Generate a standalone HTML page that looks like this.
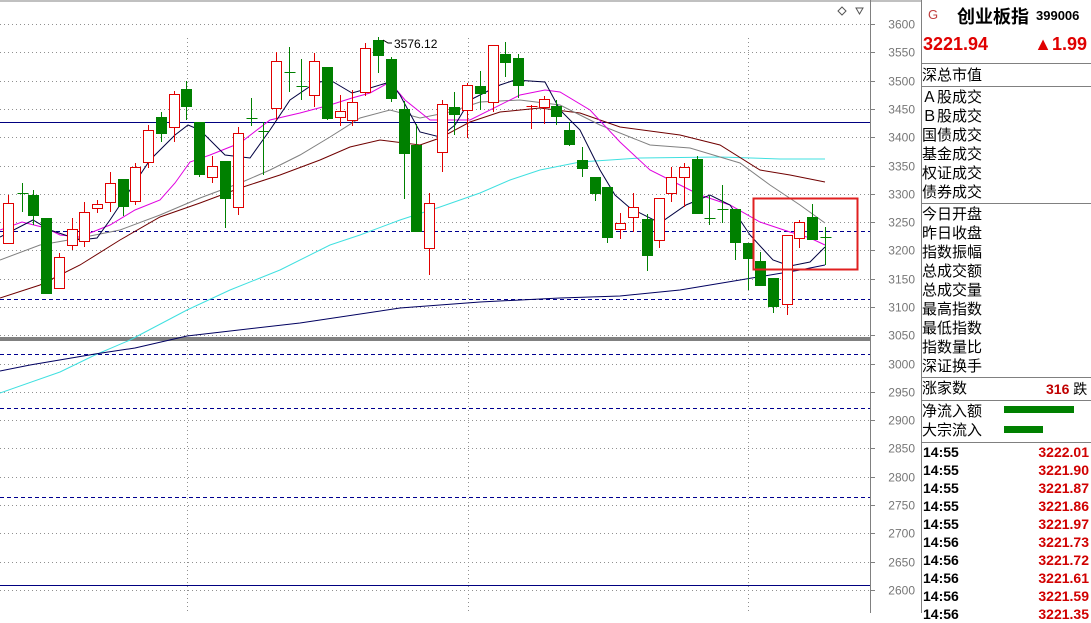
<!DOCTYPE html>
<html><head><meta charset="utf-8"><style>
body{margin:0;width:1091px;height:613px;overflow:hidden;background:#fff;font-family:"Liberation Sans","Noto Sans CJK SC",sans-serif;position:relative}
#ch{position:absolute;left:0;top:0}
.p{position:absolute;left:921px;top:0;width:170px;height:613px;border-left:1px solid #808080}
.l{position:absolute;left:922px;font-size:15px;color:#000;line-height:19px;font-family:"Noto Sans CJK SC","WenQuanYi Zen Hei",sans-serif;letter-spacing:0px}
.hr{position:absolute;left:921px;width:170px;height:1px;background:#808080}
.t{position:absolute;left:923px;font-size:14px;font-weight:bold;line-height:18px}
.v{position:absolute;right:2px;font-size:14px;font-weight:bold;color:#d00000;line-height:18px}
</style></head><body>
<svg id="ch" width="921" height="613" xmlns="http://www.w3.org/2000/svg"></svg>
<div class="p"></div>
<div style="position:absolute;left:928px;top:7px;font-size:13px;color:#c04040">G</div>
<div style="position:absolute;left:957px;top:3px;font-size:18px;font-weight:bold;font-family:'Noto Sans CJK SC',sans-serif">创业板指</div>
<div style="position:absolute;left:1036px;top:8px;font-size:13px;font-weight:bold">399006</div>
<div style="position:absolute;left:923px;top:34px;font-size:18px;font-weight:bold;color:#e00000">3221.94</div>
<div style="position:absolute;right:4px;top:34px;font-size:18px;font-weight:bold;color:#e00000">▲1.99</div>
<div class="hr" style="top:63px"></div>
<div class="l" style="top:65px">深总市值</div>
<div class="hr" style="top:86px"></div>
<div class="l" style="top:87px">Ａ股成交<br>Ｂ股成交<br>国债成交<br>基金成交<br>权证成交<br>债券成交</div>
<div class="hr" style="top:203px"></div>
<div class="l" style="top:204px">今日开盘<br>昨日收盘<br>指数振幅<br>总成交额<br>总成交量<br>最高指数<br>最低指数<br>指数量比<br>深证换手</div>
<div class="hr" style="top:377px"></div>
<div class="l" style="top:378px">涨家数</div>
<div style="position:absolute;left:1046px;top:379px;font-size:14px;font-weight:bold;color:#c00000">316 <span style="color:#000;font-weight:normal;font-family:'Noto Sans CJK SC',sans-serif">跌</span></div>
<div class="hr" style="top:400px"></div>
<div class="l" style="top:401px">净流入额<br>大宗流入</div>
<div style="position:absolute;left:1004px;top:406px;width:70px;height:7px;background:#008000"></div>
<div style="position:absolute;left:1004px;top:426px;width:39px;height:7px;background:#008000"></div>
<div class="hr" style="top:442px"></div>
<div id="tr"></div>
<script>
var S='http://www.w3.org/2000/svg',svg=document.getElementById('ch');
function el(n,a){var e=document.createElementNS(S,n);for(var k in a)e.setAttribute(k,a[k]);svg.appendChild(e);return e}
function Y(p){return 24+(3600-p)*0.566}
for(var k=0;k<=20;k++){var y=Math.round(Y(3600-k*50))+.5;el('line',{x1:0,x2:870,y1:y,y2:y,stroke:'#909090','stroke-dasharray':'1,3'});
 el('line',{x1:870,x2:875,y1:y,y2:y,stroke:'#808080'});
 var t=el('text',{x:915,y:y+4,'text-anchor':'end','font-size':'12','fill':'#777','font-family':'Liberation Sans'});t.textContent=3600-k*50;}
[187,468,748].forEach(function(x){el('line',{x1:x+.5,x2:x+.5,y1:38,y2:613,stroke:'#909090','stroke-dasharray':'1,3'})});
el('line',{x1:870.5,x2:870.5,y1:0,y2:613,stroke:'#808080'});
el('line',{x1:0,x2:921,y1:1,y2:1,stroke:'#808080'});
el('line',{x1:0,x2:870,y1:122.5,y2:122.5,stroke:'#000080'});
el('line',{x1:0,x2:870,y1:585.5,y2:585.5,stroke:'#000080'});
[231,299,354,408,497].forEach(function(y){el('line',{x1:0,x2:870,y1:y+.5,y2:y+.5,stroke:'#000090','stroke-dasharray':'4,3'})});
el('rect',{x:0,y:337,width:870,height:4,fill:'#808080'});
function pl(pts,c){el('polyline',{points:pts,fill:'none',stroke:c,'stroke-width':1})}
pl('0,393 60,372 95,355 130,340 187,310 230,290 280,270 330,245 360,235 400,220 440,207 480,193 510,180 540,170 580,162 640,158 720,157 780,159 825,159','#40e0e0');
pl('0,371 30,365 95,354 135,348 187,336 300,323 400,308 480,302 560,298 620,296 680,290 740,280 800,270 825,265','#000060');
pl('0,298 40,285 80,265 120,240 160,217 200,203 240,188 280,175 320,160 350,147 380,140 420,145 440,138 470,122 500,112 540,108 580,113 620,127 680,135 720,145 760,170 790,175 825,182','#700000');
pl('0,260 40,245 80,238 120,230 160,215 200,198 240,183 270,170 300,155 330,137 360,118 390,110 420,118 450,112 480,102 520,100 560,105 600,125 650,145 690,148 740,163 770,185 800,205 825,223','#808080');
pl('0,230 22,222 46,228 60,235 80,237 110,225 135,210 160,200 175,183 190,162 210,155 240,143 270,120 300,113 330,105 352,98 370,93 390,82 405,100 430,120 470,120 520,95 545,90 560,92 590,110 620,142 650,170 680,185 700,195 730,205 760,222 790,232 810,238 825,245','#e000e0');
pl('0,237 33,220 50,230 80,240 97,238 110,220 150,160 175,135 188,125 200,130 225,155 250,158 270,130 290,100 315,83 330,80 352,93 370,88 390,82 400,95 420,132 440,137 455,125 470,100 480,95 500,85 515,80 545,82 560,110 580,130 600,170 615,195 630,208 660,223 686,205 710,195 730,205 750,235 773,260 790,266 810,262 825,247','#000040');
var C=[[8,'r',203,243,195,243],[22,'g',193,193,183,212],[33,'g',195,215,190,225],[46,'g',218,293,218,293],[59,'r',257,288,253,288],[72,'r',229,245,218,250],[84,'r',212,241,202,247],[97,'r',204,208,200,213],[110,'r',183,202,172,212],[123,'g',179,206,179,216],[135,'r',167,201,163,205],[148,'r',130,162,125,168],[161,'g',117,133,112,142],[174,'r',94,127,91,142],[186,'g',89,106,81,120],[199,'g',122,174,122,177],[212,'r',166,177,156,183],[225,'g',161,198,161,228],[238,'r',133,207,127,215],[251,'g',118,118,98,126],[263,'g',131,131,122,175],[276,'r',61,108,52,120],[289,'g',72,72,47,92],[301,'g',86,86,59,100],[314,'r',61,95,53,107],[327,'g',67,118,67,120],[340,'r',111,117,95,126],[352,'r',102,120,90,126],[365,'r',48,92,43,96],[378,'g',40,55,37,73],[391,'g',59,98,57,102],[404,'g',109,153,101,199],[416,'g',145,231,124,231],[429,'r',203,248,193,275],
[442,'r',104,152,100,172],[454,'g',107,114,92,135],[467,'r',85,110,83,138],[480,'g',86,93,71,110],[493,'r',45,102,45,112],[505,'g',54,62,42,77],[518,'g',58,85,54,98],[531,'r',106,106,105,129],[544,'r',99,107,96,124],[556,'g',106,116,100,125],[569,'g',130,144,122,146],[582,'g',160,168,147,177],[595,'g',177,193,177,201],[607,'g',187,237,187,243],[620,'r',223,229,213,239],[633,'r',207,217,193,232],[647,'g',219,255,214,271],[659,'r',198,240,198,248],[671,'r',177,193,167,202],[684,'r',167,177,163,207],[697,'g',159,213,156,213],[709,'g',218,218,196,225],[722,'g',209,209,185,223],[735,'g',209,242,209,260],[748,'g',243,258,243,290],[760,'g',261,285,252,285],[773,'g',278,306,278,313],[787,'r',235,304,235,315],[799,'r',222,238,220,248],[812,'g',217,239,204,239],[825,'g',237,237,227,265]];
C.forEach(function(c){var col=c[1]=='r'?'#e00000':'#008000';var x=c[0]+.5;
 el('line',{x1:x,x2:x,y1:c[4],y2:c[5],stroke:col});
 var h=c[3]-c[2];
 if(h<2){el('line',{x1:x-5,x2:x+6,y1:c[2]+.5,y2:c[2]+.5,stroke:col})}
 else if(c[1]=='r'){el('rect',{x:x-5,y:c[2]+.5,width:10,height:h,fill:'#fff',stroke:col})}
 else{el('rect',{x:x-5.5,y:c[2],width:11,height:h+1,fill:col})}});
el('path',{d:'M383 40 L388 43 L392 43',fill:'none',stroke:'#000'});
var t=el('text',{x:394,y:48,'font-size':'12','fill':'#000','font-family':'Liberation Sans'});t.textContent='3576.12';
el('rect',{x:753.5,y:198.5,width:104,height:71,fill:'none',stroke:'#e02020','stroke-width':2});
el('path',{d:'M842 7 L846 11 L842 15 L838 11 Z',fill:'none',stroke:'#555'});
el('path',{d:'M856 8 L863 8 L859.5 14 Z',fill:'none',stroke:'#555'});
var tr=[['14:55','3222.01'],['14:55','3221.90'],['14:55','3221.87'],['14:55','3221.86'],['14:55','3221.97'],['14:56','3221.73'],['14:56','3221.72'],['14:56','3221.61'],['14:56','3221.59'],['14:56','3221.35']],h='';
tr.forEach(function(r,i){var y=443+i*18;h+='<div class="t" style="top:'+y+'px">'+r[0]+'</div><div class="v" style="top:'+y+'px">'+r[1]+'</div>'});
document.getElementById('tr').innerHTML=h;
</script>
</body></html>
